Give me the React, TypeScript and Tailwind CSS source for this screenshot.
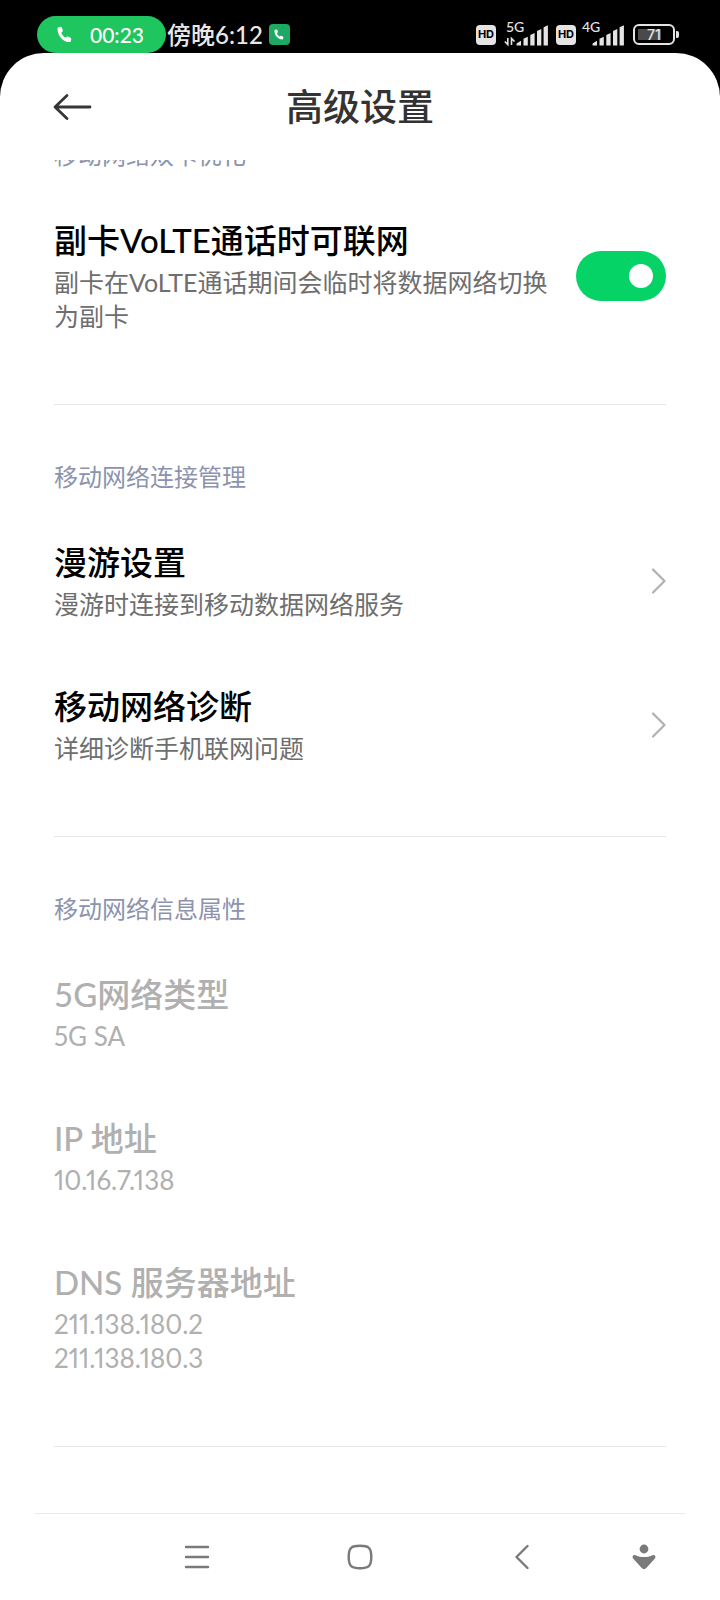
import { useState, type ReactNode } from 'react';

const infoRows = [
  { title: '5G网络类型', lines: ['5G SA'] },
  { title: 'IP 地址', lines: ['10.16.7.138'] },
  { title: 'DNS 服务器地址', lines: ['211.138.180.2', '211.138.180.3'] },
];

const linkRows = [
  { title: '漫游设置', summary: '漫游时连接到移动数据网络服务' },
  { title: '移动网络诊断', summary: '详细诊断手机联网问题' },
];

function PhoneIcon({ className }: { className: string }) {
  return (
    <svg viewBox="0 0 16 18" className={className} fill="currentColor" aria-hidden="true">
      <path d="M1.6 1.2 4 .8c.6-.1 1.1.2 1.3.8l.9 3c.1.5 0 1-.4 1.3L4.5 7.1c.9 2.2 2.3 3.9 4.3 5.2l1.6-1c.4-.3.9-.3 1.3-.1l2.8 1.3c.6.3.8.8.7 1.4l-.5 2.2c-.1.6-.6 1-1.2 1C6.300 17 .5 10.4.5 2.5c0-.6.4-1.2 1.1-1.3z" />
    </svg>
  );
}

function HdBadge() {
  return (
    <span className="flex h-5 w-5 items-center justify-center rounded-[4px] bg-[#e4e4e4] font-['Inter',sans-serif] text-[11px] leading-none font-bold text-black">
      HD
    </span>
  );
}

function Signal({ label, active }: { label: string; active?: boolean }) {
  return (
    <div className="relative h-6 w-11">
      <span className="absolute -top-1 left-0.5 text-[14px] leading-4 font-medium text-[#e4e4e4]">{label}</span>
      <svg viewBox="0 0 44 24" className="h-6 w-11" fill="#e4e4e4" aria-hidden="true">
        {active && (
          <path d="M3.800 15v6.500L.8 18.500M7.500 22v-6.500l3 3" fill="none" stroke="#e4e4e4" strokeWidth="1.6" />
        )}
        <path d="M12.6 22.5V20.5L17 17.8v4.700zM19.500 22.500v-6.700l4.300-2v8.700zM26.300 22.500V12l4.300-2v12.500zM33 22.500V8l4.300-2v16.500zM39.600 22.500V4.200l4.300-2v20.300z" />
      </svg>
    </div>
  );
}

function StatusBar() {
  return (
    <div className="flex h-[53px] items-end justify-between pr-[41px] pl-[37px] text-[#e8e8e8]">
      <div className="flex items-center">
        <div className="flex h-[37px] w-[129px] items-center gap-[18px] rounded-full bg-[#1fc55f] pl-5 text-[21px] font-medium text-white">
          <PhoneIcon className="h-[17px] w-[15px]" />
          <span>00:23</span>
        </div>
        <span className="pl-px text-[24px] leading-8 font-medium">傍晚6:12</span>
        <span className="ml-1.5 flex h-[21px] w-[21px] items-center justify-center rounded-[4px] bg-[#1da964] text-white">
          <PhoneIcon className="h-[11px] w-[10px]" />
        </span>
      </div>
      <div className="flex h-[37px] items-center">
        <HdBadge />
        <div className="ml-2">
          <Signal label="5G" active />
        </div>
        <div className="ml-2">
          <HdBadge />
        </div>
        <div className="ml-1">
          <Signal label="4G" />
        </div>
        <div className="ml-[9px] flex items-center gap-px">
          <div className="flex h-[21px] w-[42px] rounded-[6px] border-2 border-[#e4e4e4] p-[3px]">
            <div className="flex flex-1 items-center justify-center bg-linear-to-r from-[#4a4a4a] from-71% to-black to-71% font-['Inter',sans-serif] text-[14px] leading-none font-medium">
              71
            </div>
          </div>
          <div className="h-[7px] w-[3px] rounded-r-[2px] bg-[#e4e4e4]" />
        </div>
      </div>
    </div>
  );
}

function SectionTitle({ children }: { children: ReactNode }) {
  return <h2 className="pt-[55px] pb-[13px] text-[24px] leading-[34px] text-[#8d93ae]">{children}</h2>;
}

function Divider() {
  return <hr className="mt-[41px] border-t border-[#e6e6e6]" />;
}

function Chevron() {
  return (
    <svg viewBox="0 0 14 26" className="h-[26px] w-3.5 shrink-0" fill="none" stroke="#b0b0b0" strokeWidth="2.2" strokeLinecap="round" strokeLinejoin="round" aria-hidden="true">
      <path d="M1 1.5 12.5 13 1 24.5" />
    </svg>
  );
}

export default function App() {
  const [dataDuringCall, setDataDuringCall] = useState(true);

  return (
    <div className="flex min-h-screen flex-col bg-black font-['Lato','Noto_Sans_CJK_SC',sans-serif]" lang="zh-CN">
      <StatusBar />

      <div className="flex flex-1 flex-col overflow-hidden rounded-t-[44px] bg-white">
        <header className="grid h-[107px] grid-cols-[1fr_auto_1fr] items-center px-[53px]">
          <button type="button" aria-label="返回" className="w-10">
            <svg viewBox="0 0 40 28" className="h-7 w-10" fill="none" stroke="#363636" strokeWidth="2.8" strokeLinecap="round" strokeLinejoin="round">
              <path d="M37 14H2M14 2.5 2 14l12 11.5" />
            </svg>
          </button>
          <h1 className="text-[37px] leading-[50px] font-medium text-[#333333]">高级设置</h1>
        </header>

        {/* the first heading is scrolled half under the header */}
        <main className="flex-1 overflow-hidden px-[54px]">
          <section className="-mt-[77px]">
            <SectionTitle>移动网络双卡优化</SectionTitle>
            <div className="flex items-center gap-3 pt-[34px] pb-[30px]">
              <label htmlFor="volte" className="flex-1">
                <span className="mb-1 block text-[33px] leading-[42px] font-medium text-black">副卡VoLTE通话时可联网</span>
                <span className="block text-[25px] leading-[34px] text-[#6e6e6e]">副卡在VoLTE通话期间会临时将数据网络切换为副卡</span>
              </label>
              <input
                id="volte"
                type="checkbox"
                role="switch"
                checked={dataDuringCall}
                onChange={(e) => setDataDuringCall(e.target.checked)}
                className="flex h-[50px] w-[90px] shrink-0 appearance-none items-center rounded-full bg-gray-200 px-[13px] before:h-6 before:w-6 before:rounded-full before:bg-white checked:justify-end checked:bg-[#06d366]"
              />
            </div>
            <Divider />
          </section>

          <section>
            <SectionTitle>移动网络连接管理</SectionTitle>
            {linkRows.map((row) => (
              <button key={row.title} type="button" className="flex w-full items-center justify-between pt-[34px] pb-[30px] text-left">
                <span>
                  <span className="mb-1 block text-[33px] leading-[42px] font-medium text-black">{row.title}</span>
                  <span className="block text-[25px] leading-[34px] text-[#6e6e6e]">{row.summary}</span>
                </span>
                <Chevron />
              </button>
            ))}
            <Divider />
          </section>

          <section>
            <SectionTitle>移动网络信息属性</SectionTitle>
            {infoRows.map((row) => (
              <div key={row.title} className="pt-[34px] pb-[30px] text-[#b0b0b0]">
                <h3 className="mb-1 text-[33px] leading-[42px] font-medium">{row.title}</h3>
                {row.lines.map((line) => (
                  <p key={line} className="text-[26px] leading-[34px] proportional-nums">{line}</p>
                ))}
              </div>
            ))}
            <Divider />
          </section>
        </main>

        <nav className="px-[35px]">
          <div className="flex h-[87px] items-center border-t border-[#e8e8e8] pl-[81px] text-[#7a7a7a]">
            <button type="button" aria-label="最近任务" className="flex flex-2 justify-center">
              <svg viewBox="0 0 26 26" className="h-[26px] w-[26px]" fill="none" stroke="currentColor" strokeWidth="2.4" strokeLinecap="round">
                <path d="M2 3h22M2 13h22M2 23h22" />
              </svg>
            </button>
            <button type="button" aria-label="主屏幕" className="flex flex-2 justify-center">
              <svg viewBox="0 0 26 26" className="h-[26px] w-[26px]" fill="none" stroke="currentColor" strokeWidth="2.4">
                <path d="M13 1.7c8.5 0 11.3 1.8 11.3 11.3S21.500 24.300 13 24.300 1.700 22.500 1.700 13 4.500 1.700 13 1.700z" />
              </svg>
            </button>
            <button type="button" aria-label="后退" className="flex flex-2 justify-center">
              <svg viewBox="0 0 14 26" className="h-[26px] w-3.5" fill="none" stroke="currentColor" strokeWidth="2.4" strokeLinecap="round" strokeLinejoin="round">
                <path d="M12.5 2 1.5 13l11 11" />
              </svg>
            </button>
            <button type="button" aria-label="辅助功能" className="flex flex-1 justify-center">
              <svg viewBox="0 0 24 26" className="h-[26px] w-6" fill="currentColor">
                <circle cx="12" cy="5" r="4.4" />
                <path d="M3.4 11.2c5.700 2.500 11.500 2.500 17.200 0 2.300-.8 3.600 1.600 2.300 3.200L14.300 24c-1.300 1.500-3.300 1.500-4.600 0L1.100 14.400c-1.300-1.600 0-4 2.300-3.200z" />
              </svg>
            </button>
          </div>
        </nav>
      </div>
    </div>
  );
}
